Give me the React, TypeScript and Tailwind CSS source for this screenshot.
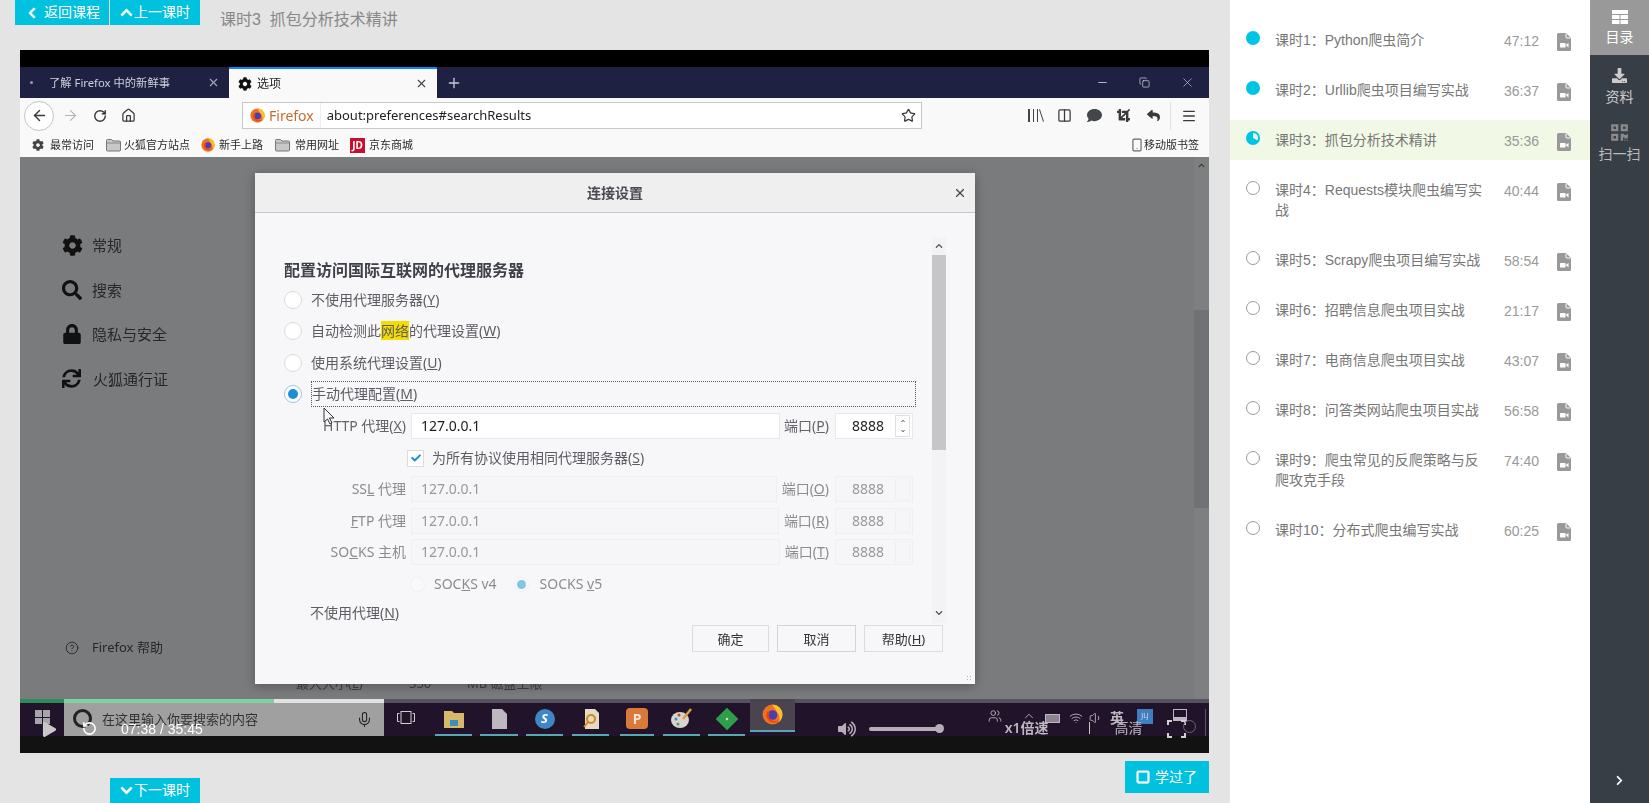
import type { ReactNode } from 'react';
import {
  FaChevronLeft,
  FaChevronRight,
  FaChevronUp,
  FaChevronDown,
  FaCog,
  FaLock,
  FaSync,
  FaVolumeUp,
  FaDownload,
  FaQrcode,
  FaRegSquare,
  FaReply,
  FaComment,
  FaCrop,
  FaSearch,
  FaCheck,
  FaPlay,
} from 'react-icons/fa';
import {
  ArrowLeft,
  ArrowRight,
  RotateCw,
  House,
  Star,
  X,
  Plus,
  Minus,
  Copy,
  CircleHelp,
  Mic,
  Menu,
  RotateCcw,
  Wifi,
  Volume1,
  Users,
  ChevronUp,
  Smartphone,
  Columns2,
} from 'lucide-react';

const lessons = [
  { title: '课时1：Python爬虫简介', time: '47:12', state: 'done' },
  { title: '课时2：Urllib爬虫项目编写实战', time: '36:37', state: 'done' },
  { title: '课时3：抓包分析技术精讲', time: '35:36', state: 'current' },
  { title: '课时4：Requests模块爬虫编写实战', time: '40:44', state: 'todo' },
  { title: '课时5：Scrapy爬虫项目编写实战', time: '58:54', state: 'todo' },
  { title: '课时6：招聘信息爬虫项目实战', time: '21:17', state: 'todo' },
  { title: '课时7：电商信息爬虫项目实战', time: '43:07', state: 'todo' },
  { title: '课时8：问答类网站爬虫项目实战', time: '56:58', state: 'todo' },
  { title: '课时9：爬虫常见的反爬策略与反爬攻克手段', time: '74:40', state: 'todo' },
  { title: '课时10：分布式爬虫编写实战', time: '60:25', state: 'todo' },
];

function FirefoxLogo({ size }: { size: number }) {
  return (
    <svg width={size} height={size} viewBox="0 0 20 20" className="shrink-0">
      <circle cx="10" cy="10" r="9.5" fill="#f0701f" />
      <path d="M10 .5a9.5 9.5 0 0 1 9.5 9.5c0 3-1.4 5.6-3.5 7.3 1-2 1.2-5.5-.7-8.3C14 7 12.5 5 10 .5z" fill="#fbc02d" />
      <circle cx="10" cy="10.5" r="4.6" fill="#4a3fb0" />
      <path d="M5 7c-1.5 3-.8 7 2 9.2 3 2.3 7 1.8 9-.4-3 1-6.5.5-8.3-1.6C6.200 12.500 6 10 7.500 8.500z" fill="#e8431f" />
    </svg>
  );
}

function Folder() {
  return (
    <svg width="15" height="14" viewBox="0 0 15 14" className="shrink-0">
      <path d="M.5 2.500A1 1 0 0 1 1.500 1.500h4l1.500 1.500h6.500a1 1 0 0 1 1 1v8a1 1 0 0 1-1 1h-12a1 1 0 0 1-1-1z" fill="#c8c8c8" stroke="#777" />
      <path d="M1 5h13" stroke="#8a8a8a" />
    </svg>
  );
}

function FileVideo() {
  return (
    <svg width="14" height="18" viewBox="0 0 14 18" className="-mb-[1px] ml-[18px] mt-[3px] shrink-0">
      <path d="M1.500 0H9l5 5v11.500a1.500 1.500 0 0 1-1.500 1.500h-11A1.500 1.500 0 0 1 0 16.500v-15A1.500 1.500 0 0 1 1.500 0z" fill="#999" />
      <path d="M9 .5V4a1 1 0 0 0 1 1h3.500" fill="none" stroke="#fff" strokeWidth="1" />
      <rect x="3" y="10" width="5.500" height="4.500" rx=".5" fill="#fff" />
      <path d="M8.500 12l3-2v4.500z" fill="#fff" />
    </svg>
  );
}

function Radio({ checked = false, small = false }: { checked?: boolean; small?: boolean }) {
  if (small) {
    return (
      <span className="flex h-[15px] w-[15px] shrink-0 items-center justify-center rounded-full border border-[#f0f0f2] bg-[#f9f9fb]">
        {checked && <span className="h-[9px] w-[9px] rounded-full bg-[#84c4e4]" />}
      </span>
    );
  }
  return (
    <span
      className={
        checked
          ? 'flex h-[18px] w-[18px] shrink-0 items-center justify-center rounded-full border border-[#9cc4e4] bg-white'
          : 'flex h-[18px] w-[18px] shrink-0 items-center justify-center rounded-full border border-[#dcdcdf] bg-white'
      }
    >
      {checked && <span className="h-[10px] w-[10px] rounded-full bg-[#1d8ed6]" />}
    </span>
  );
}

function ProxyRow({
  label,
  value,
  portLabel,
  inputWidth,
  disabled = false,
  className,
}: {
  label: ReactNode;
  value: string;
  portLabel: ReactNode;
  inputWidth: string;
  disabled?: boolean;
  className: string;
}) {
  return (
    <div className={`mr-[3px] flex h-[26px] items-center ${className}`}>
      <span className={disabled ? 'w-[122px] text-right text-[#8b8c90]' : 'w-[122px] text-right text-[#63646a]'}>{label}</span>
      <div
        className={
          disabled
            ? `ml-[5px] flex h-full items-center border border-[#efeff1] bg-[#f6f6f8] pl-[9px] text-[#98999d] ${inputWidth}`
            : `ml-[5px] flex h-full items-center border border-[#e8e8ea] bg-white pl-[9px] text-[#1d1d20] ${inputWidth}`
        }
      >
        {value}
      </div>
      <span className={disabled ? 'flex-1 text-right text-[#8b8c90]' : 'flex-1 text-right text-[#63646a]'}>{portLabel}</span>
      <div
        className={
          disabled
            ? 'ml-[6px] flex h-full w-[78px] items-center justify-between border border-[#efeff1] bg-[#f6f6f8] pl-[16px] pr-[2px] text-[#98999d]'
            : 'ml-[6px] flex h-full w-[78px] items-center justify-between border border-[#e8e8ea] bg-white pl-[16px] pr-[2px] text-[#1d1d20]'
        }
      >
        8888
        {disabled ? (
          <span className="h-[22px] w-[15px] border border-[#f0f0f2]" />
        ) : (
          <span className="flex h-[22px] w-[15px] flex-col items-center justify-around border border-[#e0e0e2] text-[#333]">
            <FaChevronUp size={4} />
            <FaChevronDown size={4} />
          </span>
        )}
      </div>
    </div>
  );
}

function Dialog() {
  return (
    <div className="absolute left-[235px] top-[123px] flex h-[511px] w-[720px] flex-col bg-[#f7f7f9] text-[14px] leading-[20px] text-[#5c5d63] shadow-[0_2px_10px_rgba(0,0,0,0.3)]">
      <div className="flex h-[40px] shrink-0 items-center border-b border-[#c8c8ca] bg-[#efeff0]">
        <span className="flex-1 pl-[22px] text-center text-[14px] font-semibold text-[#4a4b50]">连接设置</span>
        <X size={14} strokeWidth={2} className="mr-[8px] text-[#444]" />
      </div>
      <div className="flex h-[410px] shrink-0">
        <div className="flex-1 pl-[29px] pr-[16px] pt-[46px]">
          <h2 className="h-[22px] text-[16px] font-bold leading-[22px] text-[#3e4148]">配置访问国际互联网的代理服务器</h2>
          <div className="mt-[3px] flex h-[31.5px] items-center gap-[9px]">
            <Radio />
            <span>不使用代理服务器(<u>Y</u>)</span>
          </div>
          <div className="flex h-[31.5px] items-center gap-[9px]">
            <Radio />
            <span>
              自动检测此<span className="bg-[#f7dc00]">网络</span>的代理设置(<u>W</u>)
            </span>
          </div>
          <div className="flex h-[31.5px] items-center gap-[9px]">
            <Radio />
            <span>使用系统代理设置(<u>U</u>)</span>
          </div>
          <div className="flex h-[31.5px] items-center gap-[9px]">
            <Radio checked />
            <div className="flex h-[26px] flex-1 items-center border border-dotted border-[#555]">
              手动代理配置(<u>M</u>)
            </div>
          </div>
          <ProxyRow
            className="mt-[3px]"
            label={<>HTTP 代理(<u>X</u>)</>}
            value="127.0.0.1"
            portLabel={<>端口(<u>P</u>)</>}
            inputWidth="w-[369px]"
          />
          <div className="mt-[9px] flex h-[20px] items-center pl-[123px]">
            <span className="flex h-[17px] w-[17px] items-center justify-center border border-[#dcdcdf] bg-white text-[#1d8ed6]">
              <FaCheck size={10} />
            </span>
            <span className="ml-[8px]">为所有协议使用相同代理服务器(<u>S</u>)</span>
          </div>
          <ProxyRow
            disabled
            className="mt-[8px]"
            label={<>SS<u>L</u> 代理</>}
            value="127.0.0.1"
            portLabel={<>端口(<u>O</u>)</>}
            inputWidth="w-[366px]"
          />
          <ProxyRow
            disabled
            className="mt-[6px]"
            label={<><u>F</u>TP 代理</>}
            value="127.0.0.1"
            portLabel={<>端口(<u>R</u>)</>}
            inputWidth="w-[368px]"
          />
          <ProxyRow
            disabled
            className="mt-[5px]"
            label={<>SO<u>C</u>KS 主机</>}
            value="127.0.0.1"
            portLabel={<>端口(<u>T</u>)</>}
            inputWidth="w-[369px]"
          />
          <div className="mt-[9px] flex h-[20px] items-center pl-[126px] text-[#8b8c90]">
            <Radio small />
            <span className="ml-[9px]">SOC<u>K</u>S v4</span>
            <span className="ml-[17px]"><Radio small checked /></span>
            <span className="ml-[11px]">SOCKS <u>v</u>5</span>
          </div>
          <div className="ml-[26px] mt-[9px] h-[20px] whitespace-nowrap text-[#5c5d63]">
            不使用代理(<u>N</u>)
          </div>
        </div>
        <div className="mr-[29px] mt-[24px] flex w-[14px] flex-col items-center bg-[#f3f3f5]">
          <FaChevronUp size={8} className="mt-[5px] text-[#555]" />
          <div className="mt-[5px] h-[195px] w-full bg-[#c6c6c8]" />
          <FaChevronDown size={8} className="mb-[6px] mt-auto text-[#555]" />
        </div>
      </div>
      <div className="flex flex-1 justify-end gap-[8px] pr-[32px] pt-[2px] text-[13px] text-[#33343a]">
        <button className="flex h-[27px] w-[77px] items-center justify-center border border-[#dcdcde] bg-[#f7f7f9]">确定</button>
        <button className="flex h-[27px] w-[79px] items-center justify-center border border-[#d4d4d6] bg-[#f7f7f9]">取消</button>
        <button className="flex h-[27px] w-[79px] items-center justify-center border border-[#dcdcde] bg-[#f7f7f9]">
          帮助(<u>H</u>)
        </button>
      </div>
      <div className="absolute bottom-[2px] right-[2px] h-[7px] w-[7px] bg-[radial-gradient(circle,#b0b0b0_1px,transparent_1px)] bg-[length:3px_3px]" />
      {/* mouse pointer caught in the recording */}
      <svg width="12" height="18" viewBox="0 0 12 18" className="absolute left-[68px] top-[234px]">
        <path d="M1 1v14l3.500-3 2.500 5 2-1-2.500-5H11z" fill="#f7f7f9" stroke="#333" strokeWidth="1" />
      </svg>
    </div>
  );
}

function TaskbarSlot({ className, children }: { className: string; children: ReactNode }) {
  return <div className={`flex h-full shrink-0 items-center justify-center border-b-2 border-[#5aa6b5] ${className}`}>{children}</div>;
}

function Frame() {
  return (
    <div className="relative flex h-[703px] w-[1189px] flex-col overflow-hidden bg-black font-['Noto_Sans','Noto_Sans_CJK_SC',sans-serif] blur-[0.35px]">
      <div className="h-[17px] shrink-0" />
      {/* browser tabs */}
      <div className="flex h-[31px] shrink-0 items-stretch bg-[#1f2142] text-[12px] leading-[16px]">
        <div className="flex w-[209px] items-center text-[#cfd0dc]">
          <span className="ml-[10px] h-[3px] w-[3px] rounded-full bg-[#9a9bb0]" />
          <span className="ml-[16px] text-[11.3px]">了解 Firefox 中的新鲜事</span>
          <X size={13} className="ml-auto mr-[9px] text-[#a8a9ba]" />
        </div>
        <div className="flex w-[208px] items-center border-t-[2px] border-[#0a84ff] bg-[#f9f9fa] text-[#222]">
          <FaCog size={14} className="ml-[9px] text-[#111]" />
          <span className="ml-[5px]">选项</span>
          <X size={13} className="ml-auto mr-[9px] text-[#444]" />
        </div>
        <div className="flex items-center pl-[9px] text-[#c8c9d4]">
          <Plus size={16} />
        </div>
        <div className="ml-auto flex items-center gap-[30px] pr-[14px] text-[#d8d9e2]">
          <Minus size={13} strokeWidth={1.5} />
          <Copy size={11} strokeWidth={1.5} />
          <X size={15} strokeWidth={1} />
        </div>
      </div>
      {/* toolbar */}
      <div className="flex h-[35px] shrink-0 items-center bg-[#f9f9fa] text-[#3a3a3e]">
        <span className="ml-[4px] flex h-[30px] w-[30px] items-center justify-center rounded-full border border-[#c4c4c6] bg-white">
          <ArrowLeft size={17} strokeWidth={2} />
        </span>
        <ArrowRight size={17} strokeWidth={1.5} className="ml-[8px] text-[#b4b4b6]" />
        <RotateCw size={14} strokeWidth={2.5} className="ml-[14px]" />
        <House size={15} strokeWidth={2} className="ml-[14px]" />
        <div className="ml-[106px] flex h-[27px] w-[680px] items-center border border-[#c8c8ca] bg-white text-[14px]">
          <span className="ml-[7px]"><FirefoxLogo size={15} /></span>
          <span className="ml-[4px] text-[#c96b2f]">Firefox</span>
          <span className="ml-[6px] h-full w-px bg-[#eee]" />
          <span className="ml-[6px] text-[13px] text-[#222]">about:preferences#searchResults</span>
          <Star size={15} strokeWidth={2} className="ml-auto mr-[5px]" />
        </div>
        <span className="ml-[106px] flex w-[14px] items-end justify-between text-[14px] font-light">
          <span className="h-[13px] w-[2px] bg-[#444]" />
          <span className="h-[13px] w-[1px] bg-[#444]" />
          <span className="h-[13px] w-[1px] bg-[#444]" />
          <span className="h-[13px] w-[1px] rotate-[-18deg] bg-[#444]" />
        </span>
        <Columns2 size={15} strokeWidth={2} className="ml-[15px]" />
        <FaComment size={15} className="ml-[15px] text-[#44464a]" />
        <FaCrop size={13} className="ml-[15px]" />
        <FaReply size={13} className="ml-[17px]" />
        <span className="ml-[10px] h-[28px] w-px bg-[#e2e2e4]" />
        <Menu size={16} strokeWidth={2} className="ml-[10px]" />
      </div>
      {/* bookmarks */}
      <div className="flex h-[24px] shrink-0 items-center bg-[#f9f9fa] text-[11px] leading-[14px] text-[#2a2a2e]">
        <FaCog size={12} className="ml-[12px] text-[#444]" />
        <span className="ml-[6px]">最常访问</span>
        <span className="ml-[12px]"><Folder /></span>
        <span className="ml-[3px]">火狐官方站点</span>
        <span className="ml-[11px]"><FirefoxLogo size={14} /></span>
        <span className="ml-[4px]">新手上路</span>
        <span className="ml-[12px]"><Folder /></span>
        <span className="ml-[5px]">常用网址</span>
        <span className="ml-[11px] flex h-[15px] w-[15px] items-center justify-center bg-[#c8102e] text-[10px] font-bold text-white">JD</span>
        <span className="ml-[4px]">京东商城</span>
        <Smartphone size={14} className="ml-auto text-[#666]" />
        <span className="mr-[10px]">移动版书签</span>
      </div>
      {/* preferences page */}
      <div className="flex min-h-0 flex-1 bg-[#7a7b7d] text-[#26272a]">
        <div className="flex flex-1 flex-col pb-[95px] pl-[42px] pt-[66px] text-[15px]">
          <div className="flex h-[44.5px] items-center">
            <FaCog size={21} className="text-[#111]" />
            <span className="ml-[9px]">常规</span>
          </div>
          <div className="flex h-[44.5px] items-center">
            <FaSearch size={20} className="text-[#111]" />
            <span className="ml-[10px]">搜索</span>
          </div>
          <div className="flex h-[44.5px] items-center">
            <FaLock size={20} className="text-[#111]" />
            <span className="ml-[10px]">隐私与安全</span>
          </div>
          <div className="flex h-[44.5px] items-center">
            <FaSync size={19} className="text-[#111]" />
            <span className="ml-[12px]">火狐通行证</span>
          </div>
          <div className="mt-auto flex h-[20px] items-center pl-[3px] text-[13px]">
            <CircleHelp size={14} strokeWidth={1.5} />
            <span className="ml-[13px]">Firefox 帮助</span>
          </div>
        </div>
        <div className="flex w-[15px] flex-col bg-[#7e7f81]">
          <FaChevronUp size={7} className="ml-[4px] mt-[5px] text-[#333]" />
          <div className="mt-[141px] h-[198px] bg-[#717275]" />
        </div>
      </div>
      {/* settings row mostly hidden by the dialog */}
      <div className="absolute left-[276px] top-[623px] flex text-[13px] leading-[20px] text-[#3f4044]">
        <span className="w-[113px]">最大大小(<u>L</u>)</span>
        <span className="w-[58px]">350</span>
        <span>MB 磁盘上限</span>
      </div>
      <Dialog />
      {/* bottom overlay: video progress, recorded taskbar, player controls */}
      <div className="absolute bottom-0 left-0 right-0 flex h-[54px] flex-col">
        <div className="flex h-[4px] shrink-0">
          <div className="w-[44px] bg-[#2f8a5c]" />
          <div className="w-[210px] bg-[#7fd19f]" />
          <div className="w-[110px] bg-[#e2e2e2]" />
          <div className="flex-1 bg-[#57505e]" />
        </div>
        <div className="flex h-[33px] shrink-0 items-stretch bg-[#21142a]">
          <div className="flex w-[44px] items-start justify-center pl-[1px] pt-[7px]">
            <div className="grid h-[14px] w-[15px] grid-cols-2 gap-[1px]">
              <span className="bg-[#a8a4ac]" />
              <span className="bg-[#a8a4ac]" />
              <span className="bg-[#a8a4ac]" />
              <span className="bg-[#a8a4ac]" />
            </div>
          </div>
          <div className="flex w-[320px] items-center bg-[#a0a0a0] text-[13px] leading-[18px] text-[#333]">
            <span className="-mt-[2px] ml-[9px] h-[19px] w-[19px] shrink-0 rounded-full border-[3px] border-[#222]" />
            <span className="-mt-[1px] ml-[10px]">在这里输入你要搜索的内容</span>
            <Mic size={17} strokeWidth={1.5} className="ml-auto mr-[11px] text-[#222]" />
          </div>
          <div className="ml-[13px] flex w-[18px] items-start pt-[8px]">
            <svg width="18" height="13" viewBox="0 0 18 13" fill="none" stroke="#d0d0d0">
              <rect x="4" y=".5" width="10" height="12" />
              <path d="M2.500 2.500H.5v8h2M15.500 2.500h2v8h-2" />
            </svg>
          </div>
          <TaskbarSlot className="ml-[20px] w-[37px]">
            <svg width="20" height="18" viewBox="0 0 20 18">
              <path d="M0 1h8l2 2h10v15H0z" fill="#d8b86a" />
              <rect x="6" y="10" width="8" height="6" fill="#3a8fb8" />
            </svg>
          </TaskbarSlot>
          <TaskbarSlot className="ml-[8px] w-[38px]">
            <svg width="15" height="20" viewBox="0 0 15 20">
              <path d="M0 0h10l5 5v15H0z" fill="#bdb8c0" />
            </svg>
          </TaskbarSlot>
          <TaskbarSlot className="ml-[8px] w-[37px]">
            <span className="flex h-[20px] w-[20px] items-center justify-center rounded-full bg-[#3f86c6] text-[13px] font-bold italic text-white">S</span>
          </TaskbarSlot>
          <TaskbarSlot className="ml-[9px] w-[37px]">
            <svg width="16" height="20" viewBox="0 0 16 20">
              <path d="M2 0h10l4 4v16H2z" fill="#e4dcc8" />
              <circle cx="8" cy="10" r="4" fill="none" stroke="#d8861e" strokeWidth="2" />
              <path d="M5 13l-4 5" stroke="#d8861e" strokeWidth="2" />
            </svg>
          </TaskbarSlot>
          <TaskbarSlot className="ml-[11px] w-[34px]">
            <span className="flex h-[21px] w-[22px] items-center justify-center rounded-[4px] bg-[#d9793a] text-[14px] font-bold text-[#f4e4d4]">P</span>
          </TaskbarSlot>
          <TaskbarSlot className="ml-[9px] w-[37px]">
            <svg width="22" height="21" viewBox="0 0 22 21">
              <ellipse cx="9" cy="12" rx="9" ry="8" fill="#d8d4d0" />
              <circle cx="5" cy="11" r="1.500" fill="#3a8fd0" />
              <circle cx="8" cy="7" r="1.500" fill="#d0433a" />
              <circle cx="7" cy="16" r="1.500" fill="#4aa84a" />
              <path d="M12 11l8-10" stroke="#d8a04a" strokeWidth="2.500" />
            </svg>
          </TaskbarSlot>
          <TaskbarSlot className="ml-[8px] w-[37px]">
            <span className="flex h-[16px] w-[16px] rotate-45 items-center justify-center bg-[#2f9e4a]">
              <span className="h-[2px] w-[2px] bg-[#d8f0d8]" />
            </span>
          </TaskbarSlot>
          <TaskbarSlot className="relative z-10 -mt-[4px] ml-[5px] h-[37px] w-[45px] bg-[#4a4350]">
            <FirefoxLogo size={21} />
          </TaskbarSlot>
          <div className="ml-[193px] flex items-start pt-[6px] text-[#bdb8c0]">
            <Users size={14} strokeWidth={1.5} />
            <ChevronUp size={14} strokeWidth={1.5} className="ml-[20px]" />
            <span className="ml-[9px] mt-[5px] h-[9px] w-[15px] border border-[#bdb8c0] bg-[#8a8590]" />
            <Wifi size={14} strokeWidth={1.5} className="ml-[9px] mt-[2px]" />
            <Volume1 size={14} strokeWidth={1.5} className="ml-[6px] mt-[2px]" />
            <span className="ml-[7px] text-[14px] font-semibold leading-[18px]">英</span>
            <span className="ml-[13px] flex h-[15px] w-[16px] items-center justify-center bg-[#3f7fc0] text-[7px] text-[#dde]">JLJ</span>
            <span className="ml-[20px] flex h-[12px] w-[14px] items-end border border-[#bdb8c0]">
              <span className="h-[3px] w-full bg-[#bdb8c0]" />
            </span>
            <span className="ml-[18px] h-[30px] w-px bg-[#5a5560]" />
          </div>
        </div>
        <div className="flex-1 bg-[#121212]" />
        {/* player controls sit on top of the recorded taskbar */}
        <div className="absolute left-0 right-0 top-[20px] flex h-[18px] items-center text-[14px] leading-[18px] text-[#e8e8e8]">
          <FaPlay size={15} className="ml-[22px] mt-[2px] text-[#c8c8c8]" />
          <RotateCcw size={15} strokeWidth={2.5} className="ml-[25px] text-white" />
          <span className="ml-[24px] mt-[2px] font-['Liberation_Sans',sans-serif] text-white">07:38 / 35:45</span>
          <FaVolumeUp size={18} className="ml-[635px] mt-[2px] text-[#b5aeb8]" />
          <span className="ml-[13px] mt-[1px] h-[4px] w-[70px] rounded-full bg-[#b5aeb8]" />
          <span className="-ml-[4px] mt-[1px] h-[9px] w-[9px] rounded-full bg-[#b5aeb8]" />
          <span className="ml-[61px] font-semibold text-[#bdb8c0]">x1倍速</span>
          <span className="ml-[40px] h-[12px] w-px bg-[#c8c8c8]" />
          <span className="ml-[25px] text-[#bdb8c0]">高清</span>
          <svg width="19" height="18" viewBox="0 0 19 18" fill="none" stroke="#d0d0d0" strokeWidth="2" className="ml-[24px] mt-[1px] shrink-0">
            <path d="M1 5V1h4M14 1h4v4M18 13v4h-4M5 17H1v-4" />
          </svg>
          <span className="-ml-[3px] -mt-[4px] h-[13px] w-[13px] shrink-0 rounded-full border border-[#6a6570]" />
        </div>
      </div>
    </div>
  );
}

function Sidebar() {
  return (
    <div className="flex w-[59px] shrink-0 flex-col items-center bg-[#373e46] text-[14px] leading-[18px]">
      <div className="flex h-[55px] w-full flex-col items-center bg-[#999999] pt-[10px] text-white">
        <svg width="16" height="14" viewBox="0 0 16 14" fill="#fff">
          <rect width="16" height="4" />
          <rect y="5" width="7.500" height="4" />
          <rect x="8.500" y="5" width="7.500" height="4" />
          <rect y="10" width="7.500" height="4" />
          <rect x="8.500" y="10" width="7.500" height="4" />
        </svg>
        <span className="mt-[4px]">目录</span>
      </div>
      <div className="flex h-[55px] w-full flex-col items-center pt-[13px] text-[#cccccc]">
        <FaDownload size={15} />
        <span className="mt-[5px]">资料</span>
      </div>
      <div className="flex h-[55px] w-full flex-col items-center pt-[13px] text-[#bbbbbb]">
        <FaQrcode size={19} className="text-[#8a8a8a]" />
        <span className="mt-[3px]">扫一扫</span>
      </div>
      <FaChevronRight size={11} className="mb-[17px] mt-auto text-white" />
    </div>
  );
}

function LessonDot({ state }: { state: string }) {
  if (state === 'done') {
    return <span className="mt-[1px] h-[14px] w-[14px] shrink-0 rounded-full bg-[#00c4e3]" />;
  }
  if (state === 'current') {
    return (
      <svg width="14" height="14" viewBox="0 0 14 14" className="mt-[1px] shrink-0">
        <circle cx="7" cy="7" r="7" fill="#00c4e3" />
        <path d="M7 7V2a5 5 0 0 1 4.500 7.200z" fill="#e4f6f8" />
      </svg>
    );
  }
  return <span className="mt-[1px] h-[14px] w-[14px] shrink-0 rounded-full border-[1.5px] border-[#999]" />;
}

function LessonList() {
  return (
    <div className="flex-1 bg-white pt-[20px]">
      {lessons.map((lesson) => (
        <div
          key={lesson.title}
          className={
            lesson.state === 'current'
              ? 'mb-[10px] flex items-start bg-[#f1f8e6] py-[10px] pl-[16px]'
              : 'mb-[10px] flex items-start py-[10px] pl-[16px]'
          }
        >
          <LessonDot state={lesson.state} />
          <span className="ml-[15px] w-[210px] text-[14px] leading-[20px] text-[#777]">{lesson.title}</span>
          <span className="ml-[19px] mt-[1px] h-[19px] w-[35px] text-[14px] leading-[20px] text-[#999]">{lesson.time}</span>
          <FileVideo />
        </div>
      ))}
    </div>
  );
}

export default function App() {
  return (
    <div className="flex h-[803px] w-[1649px] overflow-hidden font-['Liberation_Sans','Noto_Sans_CJK_SC',sans-serif]">
      <div className="flex w-[1230px] shrink-0 flex-col bg-[#e4e4e4]">
        <div className="flex h-[50px] shrink-0 items-start pl-[15px]">
          <button className="flex h-[25px] w-[94px] items-center bg-[#00c1de] pl-[11px] text-[14px] text-white">
            <FaChevronLeft size={12} stroke="currentColor" strokeWidth={30} />
            <span className="ml-[6px]">返回课程</span>
          </button>
          <button className="ml-px flex h-[25px] w-[90px] items-center bg-[#00c1de] pl-[10px] text-[14px] text-white">
            <FaChevronUp size={13} stroke="currentColor" strokeWidth={30} />
            <span className="ml-[1px]">上一课时</span>
          </button>
          <span className="ml-[20px] mt-[9px] whitespace-pre text-[16px] leading-[22px] text-[#888]">课时3  抓包分析技术精讲</span>
        </div>
        <div className="pl-[20px]">
          <Frame />
        </div>
        <div className="flex flex-1 items-start pl-[110px] pr-[21px] text-[14px] text-white">
          <button className="mt-[25px] flex h-[25px] w-[90px] items-center bg-[#00c1de] pl-[10px]">
            <FaChevronDown size={13} stroke="currentColor" strokeWidth={30} />
            <span className="ml-[1px]">下一课时</span>
          </button>
          <button className="ml-auto mt-[8px] flex h-[32px] w-[84px] items-center bg-[#00c1de] pl-[11px]">
            <FaRegSquare size={14} stroke="currentColor" strokeWidth={30} />
            <span className="ml-[5px]">学过了</span>
          </button>
        </div>
      </div>
      <div className="flex min-w-0 flex-1">
        <LessonList />
        <Sidebar />
      </div>
    </div>
  );
}
